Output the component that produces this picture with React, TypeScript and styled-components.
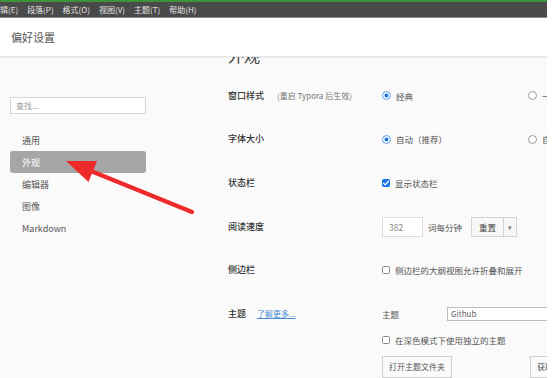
import React from 'react';
import styled, { createGlobalStyle } from 'styled-components';

const GlobalStyle = createGlobalStyle`
  html, body {
    margin: 0;
    padding: 0;
    background: #ffffff;
  }
  body {
    font-family: "Noto Sans CJK SC", "Noto Sans", "Liberation Sans", sans-serif;
    color: #333;
  }
`;

const menus = ['编辑(E)', '段落(P)', '格式(O)', '视图(V)', '主题(T)', '帮助(H)'];
const sections = ['通用', '外观', '编辑器', '图像', 'Markdown'];

const Check = () => (
  <svg width="8" height="8" viewBox="0 0 8 8">
    <path d="M1.6 4.2 L3.3 5.9 L6.5 2.2" fill="none" stroke="#fff" strokeWidth="1.3" strokeLinecap="round" strokeLinejoin="round" />
  </svg>
);

const App: React.FC = () => {
  return (
    <>
      <GlobalStyle />
      <Window>
        <TopStripe />
        <MenuBar>
          {menus.map((m, i) => (
            <MenuItem key={m} $first={i === 0}>{m}</MenuItem>
          ))}
        </MenuBar>
        <TitleBar>偏好设置</TitleBar>

        <Body>
          <Sidebar>
            <SearchBox>查找...</SearchBox>
            <NavList>
              {sections.map((s) => (
                <NavItem key={s} $active={s === '外观'}>{s}</NavItem>
              ))}
            </NavList>
          </Sidebar>

          <Main>
            <Heading>外观</Heading>

            <Row>
              <Label>
                窗口样式<Note>(重启 Typora 后生效)</Note>
              </Label>
              <Controls>
                <Option>
                  <Radio $checked />
                  经典
                </Option>
                <Option>
                  <Radio />
                  一体化
                </Option>
              </Controls>
            </Row>

            <Row>
              <Label>字体大小</Label>
              <Controls>
                <Option>
                  <Radio $checked />
                  自动（推荐）
                </Option>
                <Option>
                  <Radio />
                  自定义
                </Option>
              </Controls>
            </Row>

            <Row>
              <Label>状态栏</Label>
              <Controls>
                <CheckLine>
                  <CheckBox $checked>
                    <Check />
                  </CheckBox>
                  显示状态栏
                </CheckLine>
              </Controls>
            </Row>

            <Row>
              <Label>阅读速度</Label>
              <Controls>
                <NumberInput>382</NumberInput>
                <Unit>词每分钟</Unit>
                <SplitButton>
                  <SplitMain>重置</SplitMain>
                  <SplitArrow>▾</SplitArrow>
                </SplitButton>
              </Controls>
            </Row>

            <Row>
              <Label>侧边栏</Label>
              <Controls>
                <CheckLine>
                  <CheckBox />
                  侧边栏的大纲视图允许折叠和展开
                </CheckLine>
              </Controls>
            </Row>

            <Row $top>
              <Label>
                主题<MoreLink>了解更多...</MoreLink>
              </Label>
              <ThemeBlock>
                <ThemeLine>
                  <SubLabel>主题</SubLabel>
                  <Select>Github</Select>
                </ThemeLine>
                <CheckLine>
                  <CheckBox />
                  在深色模式下使用独立的主题
                </CheckLine>
                <ButtonLine>
                  <PlainButton>打开主题文件夹</PlainButton>
                  <PlainButton>获取主题</PlainButton>
                </ButtonLine>
              </ThemeBlock>
            </Row>
          </Main>

          <ArrowLayer width="554" height="321" viewBox="0 57 554 321">
            <line x1="192" y1="212" x2="86" y2="169" stroke="#ee2b2b" strokeWidth="4.2" strokeLinecap="round" />
            <polygon points="66,161 97,161 88.5,182" fill="#ee2b2b" />
          </ArrowLayer>
        </Body>
      </Window>
    </>
  );
};

const Window = styled.div`
  width: 547px;
  height: 378px;
  overflow: hidden;
  display: flex;
  flex-direction: column;
  background: #fafafa;
`;

const TopStripe = styled.div`
  height: 2px;
  background: #3b9437;
  flex-shrink: 0;
`;

const MenuBar = styled.div`
  height: 15px;
  background: #4a4a4a;
  border-bottom: 1px solid #8a8a8a;
  display: flex;
  align-items: center;
  gap: 9px;
  flex-shrink: 0;
  overflow: hidden;
`;

const MenuItem = styled.span<{ $first?: boolean }>`
  font-size: 8px;
  color: #e2e2e2;
  white-space: nowrap;
  margin-left: ${(p) => (p.$first ? '-8px' : '0')};
`;

const TitleBar = styled.div`
  height: 38px;
  background: #ffffff;
  border-bottom: 1px solid #e4e4e4;
  box-shadow: 0 1px 2px rgba(0, 0, 0, 0.05);
  display: flex;
  align-items: center;
  padding-left: 11px;
  font-size: 11px;
  color: #555;
  position: relative;
  z-index: 2;
  flex-shrink: 0;
`;

const Body = styled.div`
  flex: 1;
  display: flex;
  position: relative;
  overflow: hidden;
`;

const Sidebar = styled.div`
  width: 155px;
  flex-shrink: 0;
  padding: 40px 0 0 10px;
  box-sizing: border-box;
`;

const SearchBox = styled.div`
  width: 136px;
  height: 17px;
  box-sizing: border-box;
  border: 1px solid #d6d6d6;
  background: #ffffff;
  font-size: 8px;
  color: #999;
  display: flex;
  align-items: center;
  padding-left: 5px;
`;

const NavList = styled.div`
  margin-top: 15px;
  display: flex;
  flex-direction: column;
`;

const NavItem = styled.div<{ $active?: boolean }>`
  width: 136px;
  height: 22px;
  box-sizing: border-box;
  padding-left: 12px;
  display: flex;
  align-items: center;
  font-size: 9px;
  border-radius: 3px;
  color: ${(p) => (p.$active ? '#ffffff' : '#555')};
  background: ${(p) => (p.$active ? '#a6a6a6' : 'transparent')};
`;

const Main = styled.div`
  flex: 1;
  padding-left: 73px;
  display: flex;
  flex-direction: column;
  min-width: 0;
`;

const Heading = styled.div`
  font-size: 16px;
  line-height: 20px;
  height: 20px;
  margin-top: -12px;
  margin-bottom: 9px;
  color: #444;
`;

const Row = styled.div<{ $top?: boolean }>`
  display: grid;
  grid-template-columns: 154px 1fr;
  height: 43.6px;
  align-items: ${(p) => (p.$top ? 'start' : 'center')};
  padding-top: ${(p) => (p.$top ? '14px' : '0')};
  box-sizing: border-box;
  flex-shrink: 0;
`;

const Label = styled.div`
  font-size: 9px;
  line-height: 16px;
  color: #333;
  font-weight: 500;
  white-space: nowrap;
  display: flex;
  align-items: center;
`;

const Note = styled.span`
  font-size: 8px;
  color: #777;
  font-weight: 400;
  margin-left: 13px;
`;

const MoreLink = styled.span`
  font-size: 8px;
  color: #4a8fd8;
  font-weight: 400;
  text-decoration: underline;
  margin-left: 11px;
`;

const Controls = styled.div`
  display: flex;
  align-items: center;
  white-space: nowrap;
  font-size: 8.5px;
  color: #555;
`;

const Option = styled.label`
  width: 146px;
  flex-shrink: 0;
  display: flex;
  align-items: center;
  gap: 5px;
`;

const Radio = styled.span<{ $checked?: boolean }>`
  width: 9px;
  height: 9px;
  border-radius: 50%;
  box-sizing: border-box;
  flex-shrink: 0;
  border: 1px solid ${(p) => (p.$checked ? '#8fb8f2' : '#9a9a9a')};
  background: ${(p) => (p.$checked ? '#1a73e8' : '#ffffff')};
  box-shadow: ${(p) => (p.$checked ? 'inset 0 0 0 1.5px #ffffff' : 'none')};
`;

const CheckLine = styled.div`
  display: flex;
  align-items: center;
  gap: 5px;
  font-size: 8.5px;
  color: #555;
  white-space: nowrap;
  height: 16px;
`;

const CheckBox = styled.span<{ $checked?: boolean }>`
  width: 8px;
  height: 8px;
  box-sizing: border-box;
  border-radius: 1.5px;
  flex-shrink: 0;
  display: flex;
  align-items: center;
  justify-content: center;
  border: 1px solid ${(p) => (p.$checked ? '#1a73e8' : '#8a8a8a')};
  background: ${(p) => (p.$checked ? '#1a73e8' : '#ffffff')};
  svg {
    flex-shrink: 0;
  }
`;

const NumberInput = styled.div`
  width: 41px;
  height: 20px;
  box-sizing: border-box;
  border: 1px solid #dcdcdc;
  background: #ffffff;
  font-size: 8.5px;
  color: #888;
  display: flex;
  align-items: center;
  padding-left: 6px;
`;

const Unit = styled.span`
  margin-left: 5px;
`;

const SplitButton = styled.div`
  margin-left: 9px;
  height: 20px;
  display: flex;
  border: 1px solid #d4d4d4;
  box-sizing: border-box;
  background: #f7f7f7;
`;

const SplitMain = styled.span`
  width: 31px;
  display: flex;
  align-items: center;
  justify-content: center;
  border-right: 1px solid #d4d4d4;
  color: #444;
`;

const SplitArrow = styled.span`
  width: 12px;
  display: flex;
  align-items: center;
  justify-content: center;
  font-size: 7px;
  color: #777;
`;

const ThemeBlock = styled.div`
  display: flex;
  flex-direction: column;
  gap: 10px;
  min-width: 0;
`;

const ThemeLine = styled.div`
  display: flex;
  align-items: center;
  height: 16px;
  font-size: 8.5px;
  color: #555;
  white-space: nowrap;
`;

const SubLabel = styled.span`
  width: 65px;
  flex-shrink: 0;
`;

const Select = styled.div`
  width: 120px;
  flex-shrink: 0;
  height: 14px;
  box-sizing: border-box;
  border: 1px solid #bdbdbd;
  background: #ffffff;
  font-size: 8px;
  color: #666;
  display: flex;
  align-items: center;
  padding-left: 3px;
`;

const ButtonLine = styled.div`
  display: flex;
  gap: 78px;
  margin-top: -2px;
`;

const PlainButton = styled.div`
  height: 22px;
  padding: 0 6px;
  box-sizing: border-box;
  border: 1px solid #d0d0d0;
  background: #fafafa;
  font-size: 8px;
  color: #555;
  display: flex;
  align-items: center;
  white-space: nowrap;
  flex-shrink: 0;
`;

const ArrowLayer = styled.svg`
  position: absolute;
  left: 0;
  top: 0;
  pointer-events: none;
`;

export default App;
